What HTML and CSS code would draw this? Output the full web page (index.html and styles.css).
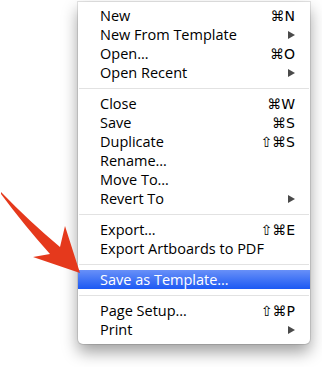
FILE: index.html
```html
<!DOCTYPE html>
<html lang="en">
<head>
  <meta charset="UTF-8">
  <title>File Menu</title>
  <link rel="stylesheet" href="styles.css">
</head>
<body>
<div class="stage">
  <ul class="menu">
    <li class="item"><span>New</span><span class="key">⌘N</span></li>
    <li class="item"><span>New From Template</span><span class="sub"></span></li>
    <li class="item"><span>Open…</span><span class="key">⌘O</span></li>
    <li class="item"><span>Open Recent</span><span class="sub"></span></li>
    <li class="sep"></li>
    <li class="item"><span>Close</span><span class="key">⌘W</span></li>
    <li class="item"><span>Save</span><span class="key">⌘S</span></li>
    <li class="item"><span>Duplicate</span><span class="key">⇧⌘S</span></li>
    <li class="item"><span>Rename…</span></li>
    <li class="item"><span>Move To…</span></li>
    <li class="item"><span>Revert To</span><span class="sub"></span></li>
    <li class="sep"></li>
    <li class="item"><span>Export…</span><span class="key">⇧⌘E</span></li>
    <li class="item"><span>Export Artboards to PDF</span></li>
    <li class="sep"></li>
    <li class="item active"><span>Save as Template…</span></li>
    <li class="sep"></li>
    <li class="item"><span>Page Setup…</span><span class="key">⇧⌘P</span></li>
    <li class="item"><span>Print</span><span class="sub"></span></li>
  </ul>

  <svg class="pointer" width="90" height="290" viewBox="0 0 90 290">
    <path d="M1 192 Q30 222 60 247 L65 226 L80 273 L33 257 L50 254 Q24 225 1 194 Z" fill="#e5391c"/>
  </svg>
</div>
</body>
</html>
```

FILE: styles.css
```css
body {
  margin: 0;
  background: #fff;
  font-family: "Open Sans", "DejaVu Sans", sans-serif;
}

.stage {
  position: relative;
  width: 322px;
  height: 367px;
  overflow: hidden;
}

.menu {
  list-style: none;
  margin: 2px 0 0 78px;
  padding: 4px 0 5px;
  width: 232px;
  box-sizing: border-box;
  background: #fff;
  border-radius: 0 0 5px 5px;
  box-shadow: 0 0 0 1px rgba(0, 0, 0, 0.1), 0 8px 16px rgba(0, 0, 0, 0.38);
}

.item {
  display: flex;
  justify-content: space-between;
  align-items: center;
  height: 19px;
  padding: 0 15px 0 22px;
  font-size: 14.5px;
  color: #000;
}

.key {
  font-family: "DejaVu Sans", sans-serif;
  font-size: 14px;
}

.sub {
  width: 0;
  height: 0;
  border-left: 7px solid #4a4a4a;
  border-top: 4px solid transparent;
  border-bottom: 4px solid transparent;
}

.sep {
  height: 1px;
  margin: 6px 1px 5px;
  background: #e2e2e2;
}

.active {
  color: #fff;
  background: linear-gradient(#6890f8, #1c59f3);
}

.pointer {
  position: absolute;
  left: 0;
  top: 0;
}
```
